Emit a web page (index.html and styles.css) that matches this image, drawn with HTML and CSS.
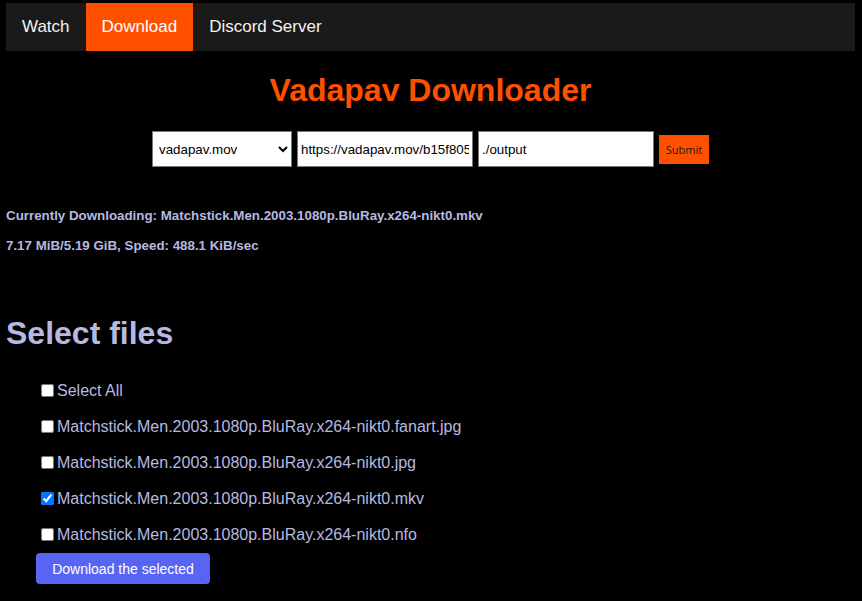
FILE: index.html
```html
<!DOCTYPE html>
<html lang="en">
<head>
<meta charset="utf-8">
<title>Vadapav Downloader</title>
<link rel="stylesheet" href="styles.css">
</head>
<body>
<nav class="topnav">
  <a class="nav-link" href="#">Watch</a>
  <a class="nav-link active" href="#">Download</a>
  <a class="nav-link" href="#">Discord Server</a>
</nav>

<h1 class="title">Vadapav Downloader</h1>

<form class="dl-form">
  <select class="field select-field">
    <option>vadapav.mov</option>
  </select>
  <input class="field text-field" type="text" value="https://vadapav.mov/b15f805">
  <input class="field text-field" type="text" value="./output">
  <button class="submit-btn" type="button">Submit</button>
</form>

<div class="status">
  <p class="status-line">Currently Downloading: Matchstick.Men.2003.1080p.BluRay.x264-nikt0.mkv</p>
  <p class="status-line">7.17 MiB/5.19 GiB, Speed: 488.1 KiB/sec</p>
</div>

<h2 class="section-title">Select files</h2>

<ul class="file-list">
  <li class="file-row"><input class="check" type="checkbox"><span>Select All</span></li>
  <li class="file-row"><input class="check" type="checkbox"><span>Matchstick.Men.2003.1080p.BluRay.x264-nikt0.fanart.jpg</span></li>
  <li class="file-row"><input class="check" type="checkbox"><span>Matchstick.Men.2003.1080p.BluRay.x264-nikt0.jpg</span></li>
  <li class="file-row"><input class="check" type="checkbox" checked><span>Matchstick.Men.2003.1080p.BluRay.x264-nikt0.mkv</span></li>
  <li class="file-row"><input class="check" type="checkbox"><span>Matchstick.Men.2003.1080p.BluRay.x264-nikt0.nfo</span></li>
</ul>

<button class="dl-btn" type="button">Download the selected</button>
</body>
</html>
```

FILE: styles.css
```css
html, body {
  background: #000;
}
body {
  margin: 3px 7px 0 6px;
  font-family: "Liberation Sans", Arial, sans-serif;
  color: #b6b9e0;
}

.topnav {
  display: flex;
  background: #1a1a1a;
  height: 48px;
}
.nav-link {
  display: block;
  padding: 0 16px;
  line-height: 48px;
  font-size: 17px;
  color: #f2f2f2;
  text-decoration: none;
}
.nav-link.active {
  background: #ff5000;
  color: #fff;
}

.title {
  margin: 21px 0 0;
  text-align: center;
  font-size: 32px;
  line-height: 37px;
  font-weight: bold;
  color: #ff5000;
}

.dl-form {
  display: flex;
  justify-content: center;
  align-items: center;
  margin-top: 22px;
  gap: 5px;
}
.field {
  box-sizing: border-box;
  height: 36px;
  font-family: "Liberation Sans", Arial, sans-serif;
  font-size: 13.33px;
  color: #000;
  background: #fff;
  border: 1px solid #767676;
  margin: 0;
}
.select-field {
  width: 140px;
  padding: 0 2px;
  border-radius: 0;
}
.text-field {
  width: 176px;
  padding: 0 3px;
}
.submit-btn {
  box-sizing: border-box;
  width: 50px;
  height: 29px;
  border: 0;
  background: #ff5000;
  color: #2a1a12;
  font-family: "Open Sans", "Noto Sans", sans-serif;
  font-size: 11px;
  padding: 0;
}

.status {
  margin-top: 41px;
  display: flex;
  flex-direction: column;
  gap: 15px;
}
.status-line {
  margin: 0;
  font-size: 13.33px;
  line-height: 15px;
  font-weight: bold;
}

.section-title {
  margin: 62px 0 0;
  font-size: 32px;
  line-height: 37px;
  font-weight: bold;
}

.file-list {
  list-style: none;
  margin: 30px 0 0;
  padding: 0 0 0 34px;
  display: flex;
  flex-direction: column;
  gap: 18px;
}
.file-row {
  display: flex;
  align-items: baseline;
  font-size: 16px;
  line-height: 18px;
}
.check {
  margin: 0 3px 0 1px;
  width: 13px;
  height: 13px;
  position: relative;
  top: 1px;
}

.dl-btn {
  margin: 9px 0 0 30px;
  width: 174px;
  height: 31px;
  border: 0;
  border-radius: 4px;
  background: #5865f2;
  color: #fff;
  font-family: "Liberation Sans", Arial, sans-serif;
  font-size: 14px;
  padding: 0;
}
```
